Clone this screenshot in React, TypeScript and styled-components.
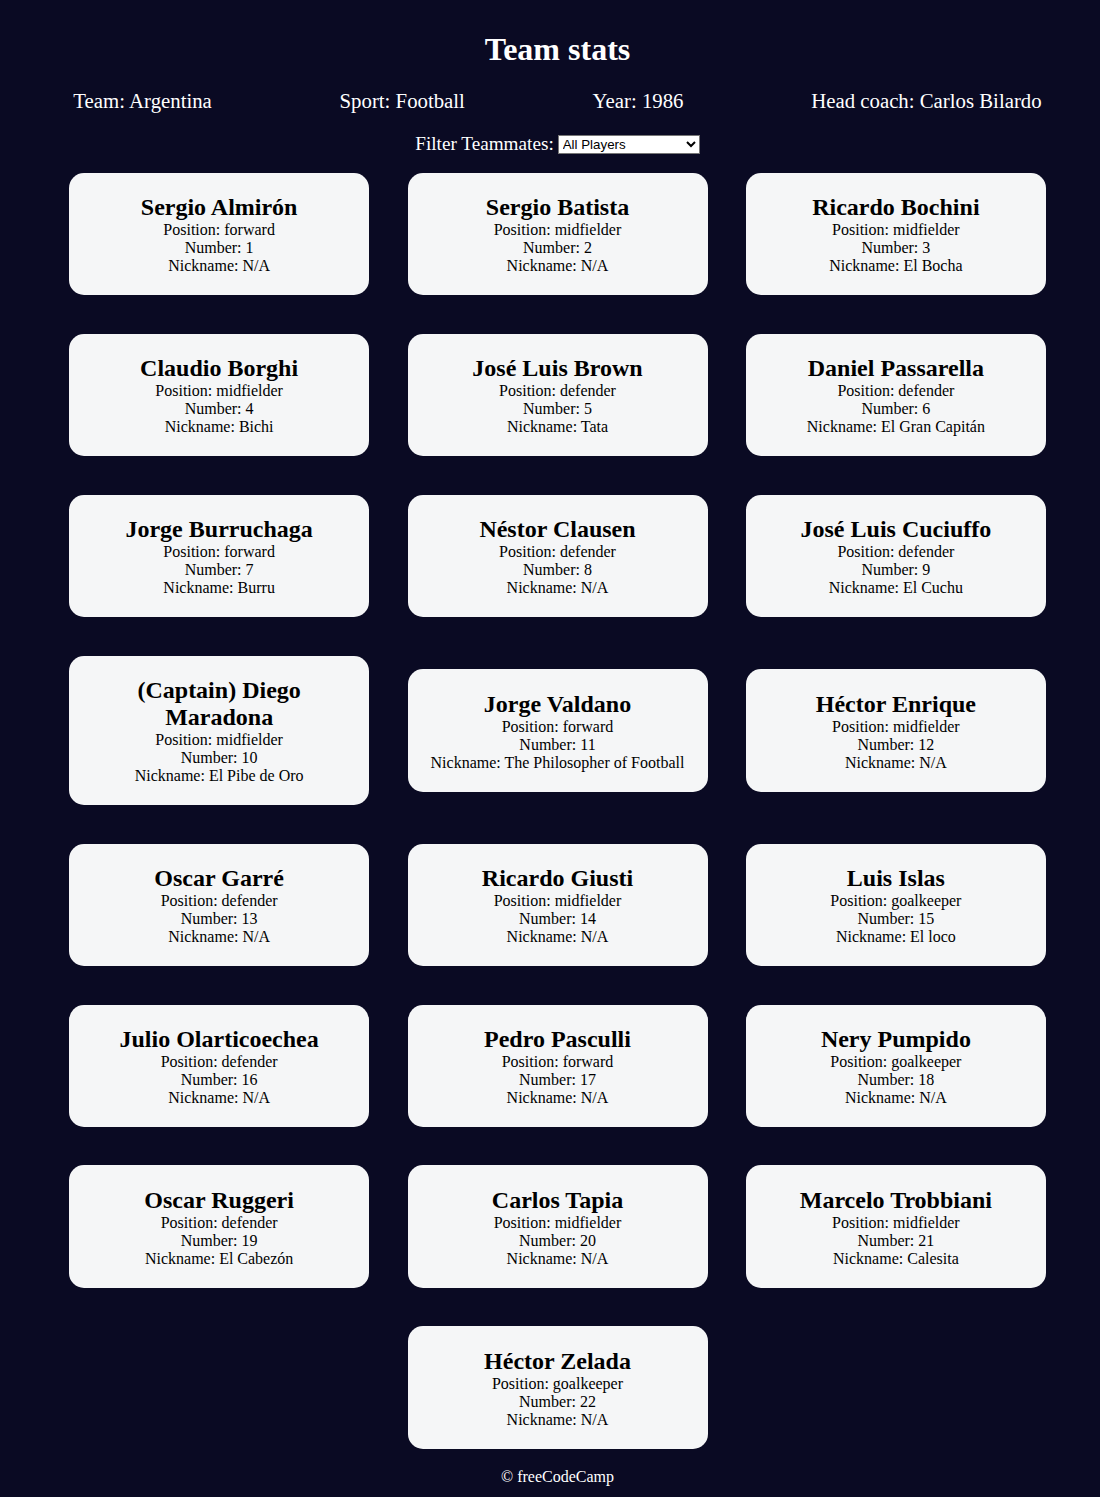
import React, { useState } from 'react';
import styled, { createGlobalStyle } from 'styled-components';

interface Player {
  name: string;
  position: string;
  number: number;
  isCaptain: boolean;
  nickname: string | null;
}

const colors = {
  white: '#ffffff',
  lightGrey: '#f5f6f7',
  darkGrey: '#0a0a23',
  black: '#000000',
};

const players: Player[] = [
  { name: 'Sergio Almirón', position: 'forward', number: 1, isCaptain: false, nickname: null },
  { name: 'Sergio Batista', position: 'midfielder', number: 2, isCaptain: false, nickname: null },
  { name: 'Ricardo Bochini', position: 'midfielder', number: 3, isCaptain: false, nickname: 'El Bocha' },
  { name: 'Claudio Borghi', position: 'midfielder', number: 4, isCaptain: false, nickname: 'Bichi' },
  { name: 'José Luis Brown', position: 'defender', number: 5, isCaptain: false, nickname: 'Tata' },
  { name: 'Daniel Passarella', position: 'defender', number: 6, isCaptain: false, nickname: 'El Gran Capitán' },
  { name: 'Jorge Burruchaga', position: 'forward', number: 7, isCaptain: false, nickname: 'Burru' },
  { name: 'Néstor Clausen', position: 'defender', number: 8, isCaptain: false, nickname: null },
  { name: 'José Luis Cuciuffo', position: 'defender', number: 9, isCaptain: false, nickname: 'El Cuchu' },
  { name: 'Diego Maradona', position: 'midfielder', number: 10, isCaptain: true, nickname: 'El Pibe de Oro' },
  { name: 'Jorge Valdano', position: 'forward', number: 11, isCaptain: false, nickname: 'The Philosopher of Football' },
  { name: 'Héctor Enrique', position: 'midfielder', number: 12, isCaptain: false, nickname: null },
  { name: 'Oscar Garré', position: 'defender', number: 13, isCaptain: false, nickname: null },
  { name: 'Ricardo Giusti', position: 'midfielder', number: 14, isCaptain: false, nickname: null },
  { name: 'Luis Islas', position: 'goalkeeper', number: 15, isCaptain: false, nickname: 'El loco' },
  { name: 'Julio Olarticoechea', position: 'defender', number: 16, isCaptain: false, nickname: null },
  { name: 'Pedro Pasculli', position: 'forward', number: 17, isCaptain: false, nickname: null },
  { name: 'Nery Pumpido', position: 'goalkeeper', number: 18, isCaptain: false, nickname: null },
  { name: 'Oscar Ruggeri', position: 'defender', number: 19, isCaptain: false, nickname: 'El Cabezón' },
  { name: 'Carlos Tapia', position: 'midfielder', number: 20, isCaptain: false, nickname: null },
  { name: 'Marcelo Trobbiani', position: 'midfielder', number: 21, isCaptain: false, nickname: 'Calesita' },
  { name: 'Héctor Zelada', position: 'goalkeeper', number: 22, isCaptain: false, nickname: null },
];

const GlobalStyle = createGlobalStyle`
  * {
    margin: 0;
    padding: 0;
    box-sizing: border-box;
  }

  html {
    overflow-x: hidden;
  }

  body {
    background-color: ${colors.darkGrey};
    font-family: 'Liberation Serif', 'Times New Roman', serif;
    text-align: center;
    padding: 10px 0 10px 9.5px;
  }
`;

const Page = styled.div`
  width: 1096px;
`;

const Title = styled.h1`
  color: ${colors.white};
  font-size: 2em;
  line-height: 1.15;
  margin: 20.8px 0;
`;

const TeamStats = styled.div`
  display: flex;
  justify-content: space-around;
  flex-wrap: wrap;
  color: ${colors.white};
  font-size: 1.3rem;
  line-height: 1.15;
  margin: 21.8px 0 19.2px;
`;

const FilterRow = styled.div`
  color: ${colors.white};
  font-size: 1.2rem;
  line-height: 23px;
  height: 21px;
`;

const Select = styled.select`
  font-family: 'Liberation Sans', Arial, sans-serif;
  font-size: 13.33px;
  width: 142px;
  height: 19px;
  vertical-align: 1px;
  margin-left: 4px;
  background: ${colors.white};
  color: ${colors.black};
  border: 1px solid #767676;
  border-radius: 0;
`;

const Cards = styled.div`
  display: flex;
  flex-wrap: wrap;
  justify-content: center;
  align-items: center;
`;

const Card = styled.div`
  background-color: ${colors.lightGrey};
  padding: 21.8px 20.8px 19.8px;
  margin: 19.2px;
  width: 300px;
  border-radius: 15px;
  color: ${colors.black};
`;

const PlayerName = styled.h2`
  font-size: 1.5em;
  line-height: 27px;
`;

const Detail = styled.p`
  font-size: 16px;
  line-height: 18px;
`;

const Footer = styled.footer`
  color: ${colors.white};
  font-size: 16px;
  line-height: 18px;
`;

export default function App() {
  const [filter, setFilter] = useState('all');

  const visible = players.filter(p => {
    if (filter === 'all') return true;
    if (filter === 'nickname') return p.nickname !== null;
    return p.position === filter;
  });

  return (
    <>
      <GlobalStyle />
      <Page>
        <Title>Team stats</Title>
        <TeamStats>
          <p>Team: Argentina</p>
          <p>Sport: Football</p>
          <p>Year: 1986</p>
          <p>Head coach: Carlos Bilardo</p>
        </TeamStats>
        <FilterRow>
          <label htmlFor='players'>Filter Teammates:</label>
          <Select id='players' value={filter} onChange={e => setFilter(e.target.value)}>
            <option value='all'>All Players</option>
            <option value='nickname'>Nicknames</option>
            <option value='forward'>Position Forward</option>
            <option value='midfielder'>Position Midfielder</option>
            <option value='defender'>Position Defender</option>
            <option value='goalkeeper'>Position Goalkeeper</option>
          </Select>
        </FilterRow>
        <Cards>
          {visible.map(p => (
            <Card key={p.number}>
              <PlayerName>{p.isCaptain ? '(Captain) ' : ''}{p.name}</PlayerName>
              <Detail>Position: {p.position}</Detail>
              <Detail>Number: {p.number}</Detail>
              <Detail>Nickname: {p.nickname !== null ? p.nickname : 'N/A'}</Detail>
            </Card>
          ))}
        </Cards>
        <Footer>&copy; freeCodeCamp</Footer>
      </Page>
    </>
  );
}
